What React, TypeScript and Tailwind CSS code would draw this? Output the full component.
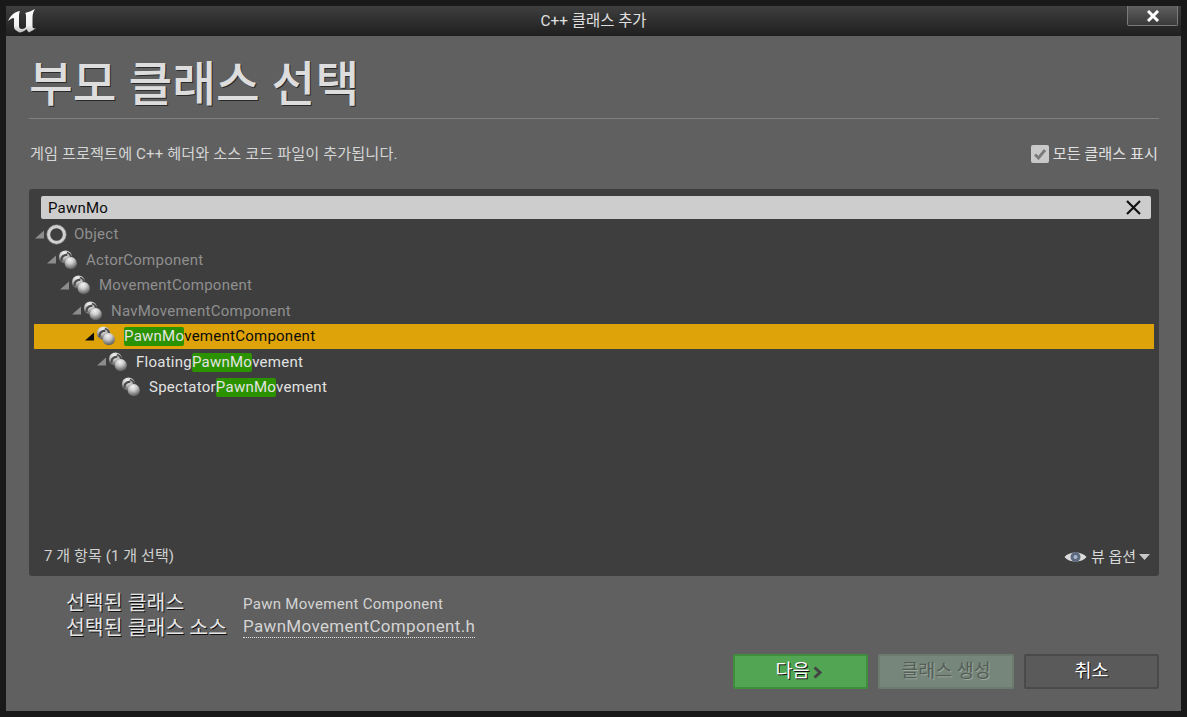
import React from "react";

const font = "font-['Roboto','Noto_Sans_CJK_KR',sans-serif]";

function ULogo() {
  return (
    <svg width="30" height="26" viewBox="0 0 30 26">
      <defs>
        <linearGradient id="ug" x1="0" y1="0" x2="0" y2="1">
          <stop offset="0" stopColor="#ffffff" />
          <stop offset="0.7" stopColor="#f0f0f0" />
          <stop offset="1" stopColor="#bdbdbd" />
        </linearGradient>
      </defs>
      <path
        fill="url(#ug)"
        d="M1 13 C3 8 7 4 13 3 C12 5 12 7 12 9 L12 18 C12 20 13 21 15 21 C17 21 18 20 19 19 L19 8 C19 6 18.5 5 18 5 C21 4 25 3 28 1 C26 4 25.5 7 25.5 10 L25.5 18 C25.5 20 26.5 21 29 20 C27 22 24 23 22 24.5 C21 23.5 20 22.5 19.5 21 C17.5 23 15 24.5 12 24.5 C11 23.5 10 23 8.5 22 C7 21 7 19 7 17 L7 11 C7 9 5 10 1 13 Z"
      />
    </svg>
  );
}

function ClassIcon({ id }: { id: string }) {
  return (
    <svg width="20" height="20" viewBox="0 0 20 20" className="shrink-0">
      <defs>
        <radialGradient id={id} cx="0.42" cy="0.22" r="0.9">
          <stop offset="0" stopColor="#f2f2f2" />
          <stop offset="0.35" stopColor="#cccccc" />
          <stop offset="0.7" stopColor="#7c7c7c" />
          <stop offset="1" stopColor="#3f3f3f" />
        </radialGradient>
      </defs>
      <circle cx="7.5" cy="7" r="6.6" fill={`url(#${id})`} />
      <path d="M3.6 11 C3 8 4.6 4.8 9.4 4.6" stroke="#4c4c4c" strokeWidth="2.2" fill="none" />
      <path d="M9 2.6 C11.4 3.6 13 5.6 13.4 8" stroke="#4a4a4a" strokeWidth="1.6" fill="none" />
      <circle cx="12.8" cy="13.2" r="6.1" fill={`url(#${id})`} />
    </svg>
  );
}

function RingIcon() {
  return (
    <svg width="21" height="21" viewBox="0 0 21 21" className="shrink-0">
      <circle cx="10.5" cy="10.5" r="8" fill="none" stroke="#d0d0d0" strokeWidth="3.4" />
      <circle cx="10.5" cy="10.5" r="9.7" fill="none" stroke="#8a8a8a" strokeWidth="0.6" />
    </svg>
  );
}

function Caret({ color }: { color: string }) {
  return (
    <svg width="11" height="9" viewBox="0 0 11 9" className="shrink-0">
      <path d="M1 8.5 H10 V0.5 Z" fill={color} />
    </svg>
  );
}

const Hi = ({ children }: { children: React.ReactNode }) => (
  <span className="bg-[#2b9200] text-[#e4e4e4] rounded-[2px] h-[19px] leading-[19px] inline-block">{children}</span>
);

type Row = {
  depth: number;
  caret: boolean;
  icon: "ring" | "cls";
  text: React.ReactNode;
  tone: "dim" | "on" | "sel";
};

const rows: Row[] = [
  { depth: 0, caret: true, icon: "ring", text: "Object", tone: "dim" },
  { depth: 1, caret: true, icon: "cls", text: "ActorComponent", tone: "dim" },
  { depth: 2, caret: true, icon: "cls", text: "MovementComponent", tone: "dim" },
  { depth: 3, caret: true, icon: "cls", text: "NavMovementComponent", tone: "dim" },
  { depth: 4, caret: true, icon: "cls", text: <><Hi>PawnMo</Hi>vementComponent</>, tone: "sel" },
  { depth: 5, caret: true, icon: "cls", text: <>Floating<Hi>PawnMo</Hi>vement</>, tone: "on" },
  { depth: 6, caret: false, icon: "cls", text: <>Spectator<Hi>PawnMo</Hi>vement</>, tone: "on" },
];

const indents = ["pl-0", "pl-[12px]", "pl-[25px]", "pl-[37px]", "pl-[50px]", "pl-[62px]", "pl-[75px]"];

function TreeRow({ r, i }: { r: Row; i: number }) {
  const sel = r.tone === "sel";
  const textCls = r.tone === "dim" ? "text-[#8f8f8f]" : sel ? "text-[#0c0c0c]" : "text-[#e2e2e2]";
  return (
    <div className={`h-[25.5px] flex items-center ${indents[r.depth]} ${sel ? "bg-[#dea309]" : ""}`}>
      <div className="w-[11px] shrink-0 flex items-center">
        {r.caret && <Caret color={sel ? "#0c0c0c" : "#8c8c8c"} />}
      </div>
      <div className="w-[22px] shrink-0 flex items-center justify-center">
        {r.icon === "ring" ? <RingIcon /> : <ClassIcon id={`cg${i}`} />}
      </div>
      <span className={`ml-[7px] text-[15px] tracking-[0.25px] whitespace-nowrap ${textCls}`}>{r.text}</span>
    </div>
  );
}

function Btn({ cls, children, w }: { cls: string; children: React.ReactNode; w: string }) {
  return (
    <div className={`${w} h-[35px] border-2 rounded-[2px] flex items-center justify-center pt-[1px] text-[18.5px] ${cls}`}>
      {children}
    </div>
  );
}

export default function App() {
  return (
    <div className={`${font} w-[1187px] h-[717px] overflow-hidden bg-[#191919] pt-[6px] px-[6px] pb-[6px] flex flex-col`}>
      <div className="h-[30px] shrink-0 bg-gradient-to-b from-[#3f3f3f] to-[#1f1f1f] flex items-center relative">
        <div className="absolute left-[1px] top-[2px]">
          <ULogo />
        </div>
        <div className="flex-1 text-center text-[15.4px] text-[#e0e0e0] pt-[1px]">C++ 클래스 추가</div>
        <div className="absolute right-[3px] top-0 w-[51px] h-[20px] bg-gradient-to-b from-[#5f5f5f] to-[#3a3a3a] border border-[#7a7a7a] border-t-0 rounded-b-[2px] flex items-center justify-center">
          <svg width="14" height="12" viewBox="0 0 14 12">
            <path d="M2 1 L12 11 M12 1 L2 11" stroke="#ffffff" strokeWidth="3" />
          </svg>
        </div>
      </div>

      <div className="flex-1 bg-[#606060] pl-[23px] pr-[22px] flex flex-col">
        <div className="h-[83px] shrink-0 border-b border-[#808080] flex items-center">
          <h1 className="text-[47.6px] leading-none font-medium text-[#dddddd] [text-shadow:1px_1px_0_#2a2a2a] mt-[18px]">부모 클래스 선택</h1>
        </div>

        <div className="h-[70px] shrink-0 flex items-start justify-between pt-[24px]">
          <span className="text-[15.2px] tracking-[0.08px] text-[#d6d6d6] pl-px">게임 프로젝트에 C++ 헤더와 소스 코드 파일이 추가됩니다.</span>
          <div className="flex items-center gap-[4px] pr-px">
            <div className="w-[18px] h-[18px] rounded-[2px] bg-[#c9c9c9] flex items-center justify-center">
              <svg width="14" height="12" viewBox="0 0 14 12">
                <path d="M2 6.5 L5.5 10 L12 2" stroke="#7a7a7a" strokeWidth="2.8" fill="none" />
              </svg>
            </div>
            <span className="text-[15.2px] text-[#e0e0e0]">모든 클래스 표시</span>
          </div>
        </div>

        <div className="h-[387px] shrink-0 bg-[#3e3e3e] rounded-[3px] px-[5px] pt-[7px] flex flex-col">
          <div className="ml-[7px] mr-[3px] h-[23px] shrink-0 bg-[#cdcdcd] rounded-[2px] flex items-center justify-between pl-[7px] pr-[10px]">
            <span className="text-[15px] tracking-[0.2px] text-[#0c0c0c] pt-[1px]">PawnMo</span>
            <svg width="15" height="15" viewBox="0 0 15 15">
              <path d="M1 1 L14 14 M14 1 L1 14" stroke="#111" strokeWidth="2.2" />
            </svg>
          </div>
          <div className="pt-[2.5px] flex-1 flex flex-col">
            {rows.map((r, i) => (
              <TreeRow key={i} r={r} i={i} />
            ))}
          </div>
          <div className="h-[45px] shrink-0 flex items-start justify-between pl-[10px] pr-[4px] pt-[14px]">
            <span className="text-[15px] tracking-[0.1px] text-[#d0d0d0]">7 개 항목 (1 개 선택)</span>
            <div className="flex items-center gap-[3px] pt-[1px]">
              <svg width="23" height="14" viewBox="0 0 23 14" className="mr-px">
                <path d="M0.5 7 C5 1 18 1 22.5 7 C18 13 5 13 0.5 7 Z" fill="#dcdcdc" />
                <circle cx="11.5" cy="7" r="5" fill="#5c6a80" />
                <circle cx="11.5" cy="7" r="2" fill="#a9b6c8" />
              </svg>
              <span className="text-[15px] text-[#d8d8d8]">뷰 옵션</span>
              <svg width="11" height="6" viewBox="0 0 11 6">
                <path d="M0 0 H11 L5.5 6 Z" fill="#c8c8c8" />
              </svg>
            </div>
          </div>
        </div>

        <div className="pl-[37px] pt-[15px] shrink-0 flex">
          <div className="w-[177px] text-[20.5px] leading-[25px] text-[#e6e6e6] [text-shadow:1px_1px_0_#111]">
            <div>선택된 클래스</div>
            <div>선택된 클래스 소스</div>
          </div>
          <div>
            <div className="h-[25px] flex items-center pt-[1px] text-[15px] tracking-[0.3px] text-[#d4d4d4]">Pawn Movement Component</div>
            <div className="text-[17px] leading-[21px] tracking-[0.33px] text-[#d4d4d4] border-b border-dotted border-[#e0e0e0]">PawnMovementComponent.h</div>
          </div>
        </div>

        <div className="mt-auto mb-[22px] flex justify-end gap-[10px]">
          <Btn w="w-[135px]" cls="bg-[#52a552] border-[#3e8e3e] text-white [text-shadow:1px_1px_0_#111]">
            <span className="-ml-[3px]">다음</span>
            <svg width="10" height="13" viewBox="0 0 10 13" className="ml-[3px]">
              <path d="M1.5 1.5 L7 6.5 L1.5 11.5" stroke="#444" strokeWidth="3" fill="none" />
            </svg>
          </Btn>
          <Btn w="w-[136px]" cls="bg-[#76867a] border-[#6b7b6f] text-[#555d57] [text-shadow:1px_1px_0_#9aa79d]">클래스 생성</Btn>
          <Btn w="w-[135px]" cls="bg-[#5a5a5a] border-[#4a4a4a] text-white [text-shadow:1px_1px_0_#111]">취소</Btn>
        </div>
      </div>
    </div>
  );
}
